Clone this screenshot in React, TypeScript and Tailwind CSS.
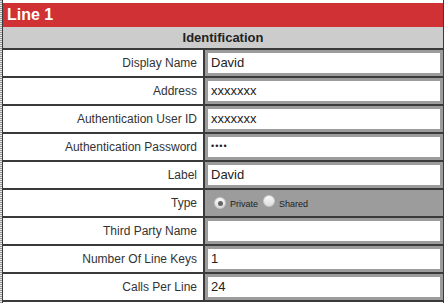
import React from "react";

const rows = [
  { label: "Display Name", value: "David" },
  { label: "Address", value: "xxxxxxx" },
  { label: "Authentication User ID", value: "xxxxxxx" },
  { label: "Authentication Password", value: "••••", password: true },
  { label: "Label", value: "David" },
  { label: "Type", radio: true },
  { label: "Third Party Name", value: "" },
  { label: "Number Of Line Keys", value: "1" },
  { label: "Calls Per Line", value: "24" },
];

function Radio({ checked }: { checked?: boolean }) {
  return (
    <span className="inline-flex h-[12px] w-[12px] items-center justify-center rounded-full bg-gradient-to-b from-[#fafafa] to-[#dcdcdc] border border-[#c8c8c8]">
      {checked && <span className="h-[5px] w-[5px] rounded-full bg-[#666]" />}
    </span>
  );
}

export default function App() {
  return (
    <div className="flex h-[303px] w-[446px] overflow-hidden bg-white font-['Liberation_Sans',Arial,sans-serif]">
      {/* dotted left edge */}
      <div className="w-[2px] bg-[repeating-linear-gradient(0deg,#9a9a9a_0px,#9a9a9a_1px,#e6e6e6_1px,#e6e6e6_2px)]" />
      <div className="flex w-[442px] flex-col border-x border-[#3a3a3a]">
        <div className="mt-[3px] flex h-[24px] shrink-0 items-center bg-[#d03134] pl-[4px] text-[16px] font-bold text-white">
          Line 1
        </div>
        <div className="flex h-[23px] shrink-0 items-center justify-center border-b-2 border-[#3a3a3a] bg-[#cccccc] text-[13px] font-bold text-[#222]">
          Identification
        </div>
        {rows.map((r, i) => (
          <div key={i} className="flex h-[28px] shrink-0 border-b-2 border-[#3a3a3a]">
            <div className="flex w-[202px] items-center justify-end border-r-2 border-[#3a3a3a] pr-[6px] text-[12px] text-[#333]">
              {r.label}
            </div>
            <div className="flex flex-1 items-center bg-[#9c9c9c] px-[3px]">
              {r.radio ? (
                <div className="flex items-center pl-[6px] text-[9px] text-[#222]">
                  <Radio checked />
                  <span className="ml-[4px] mt-[4px]">Private</span>
                  <span className="ml-[5px]">
                    <Radio />
                  </span>
                  <span className="ml-[4px] mt-[4px]">Shared</span>
                </div>
              ) : (
                <div className="flex h-[20px] w-full items-center bg-white pl-[3px] text-[13px] text-[#222]">
                  {r.password ? (
                    <span className="text-[9px] tracking-[1px]">{r.value}</span>
                  ) : (
                    r.value
                  )}
                </div>
              )}
            </div>
          </div>
        ))}
      </div>
    </div>
  );
}
